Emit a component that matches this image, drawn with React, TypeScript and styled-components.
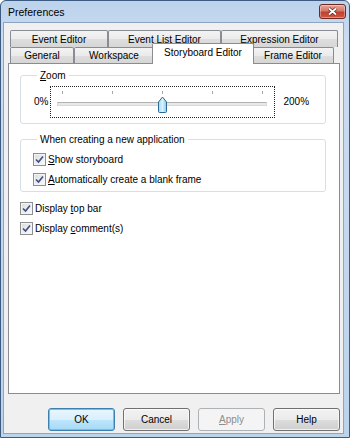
import React, { FC, ReactNode } from 'react';
import styled, { createGlobalStyle, css } from 'styled-components';

const GlobalStyle = createGlobalStyle`
  html,
  body {
    margin: 0;
    padding: 0;
    background: #fff;
  }

  body {
    font-family: 'Liberation Sans', Arial, sans-serif;
    font-size: 10px;
    color: #000;
  }
`;

const Window = styled.div`
  box-sizing: border-box;
  width: 350px;
  height: 438px;

  display: flex;
  flex-direction: column;

  padding: 0 5px 3px 2px;
  border: 1px solid #3d5a80;
  border-radius: 6px 6px 0 0;

  background: linear-gradient(#bcd3ec, #cadcf0 40px, #bcd3ec);
`;

const TitleBar = styled.div`
  height: 21px;

  display: flex;
  justify-content: space-between;
  align-items: center;

  padding-left: 5px;

  font-size: 10.5px;
`;

const CloseButton = styled.div`
  box-sizing: border-box;
  width: 27px;
  height: 15px;
  margin-right: -2px;

  display: flex;
  justify-content: center;
  align-items: center;

  border: 1px solid #6e2a22;
  border-radius: 3px;

  background: linear-gradient(#e6a699, #d47a6a 45%, #c0412d 55%, #d2583f);
  box-shadow: inset 0 0 0 1px rgba(255, 255, 255, 0.35);
`;

const Client = styled.div`
  flex: 1;

  display: flex;
  flex-direction: column;

  padding: 7px 3px 2px 4px;
  border: 1px solid #8ba5c2;

  background-color: #f0f0f0;
`;

const TabRow = styled.div<{ $height: number }>`
  height: ${(p) => p.$height}px;

  display: flex;
  align-items: flex-end;

  padding: 0 2px;
`;

const Tab = styled.div<{ $width: number; $selected?: boolean }>`
  box-sizing: border-box;
  width: ${(p) => p.$width}px;
  height: 100%;

  display: flex;
  justify-content: center;
  align-items: center;

  border: 1px solid #898c95;
  border-bottom: none;
  border-radius: 2px 2px 0 0;

  background: linear-gradient(#f3f3f3, #ebebeb 50%, #dedede 51%, #d6d6d6);

  ${(p) =>
    p.$selected &&
    css`
      position: relative;
      z-index: 2;

      height: 21px;
      margin: 0 -2px -1px;
      padding-bottom: 3px;

      background: #fff;
    `}
`;

const Panel = styled.div`
  flex: 1;

  display: flex;
  flex-direction: column;
  gap: 10px;

  padding: 6px 13px 0 11px;
  border: 1px solid #898c95;

  background-color: #fff;
`;

const Group = styled.fieldset<{ $inset?: number }>`
  min-inline-size: 0;
  margin: 0;
  padding: 0 0 5px ${(p) => p.$inset ?? 12}px;
  border: 1px solid #d5dfe5;
  border-radius: 3px;
`;

const Legend = styled.legend<{ $shift?: number }>`
  margin-left: ${(p) => 4 - (p.$shift ?? 0)}px;
  padding: 0 3px;

  line-height: 11px;
`;

const SliderLine = styled.div`
  display: flex;
  align-items: center;

  margin-top: 5px;
`;

const SliderLabel = styled.span<{ $before?: number; $after?: number }>`
  margin: 0 ${(p) => p.$after ?? 0}px 2px ${(p) => p.$before ?? 0}px;
`;

const SliderFocus = styled.div`
  position: relative;
  box-sizing: border-box;
  width: 225px;
  height: 32px;

  padding: 4px 0 0 11px;
  border: 1px dotted #222;
`;

const Ticks = styled.div`
  width: 201px;

  display: flex;
  justify-content: space-between;
`;

const Tick = styled.span`
  width: 1px;
  height: 3px;

  background-color: #a7a7a7;
`;

const Track = styled.div`
  box-sizing: border-box;
  width: 210px;
  height: 4px;
  margin: 8px 0 0 -5px;

  border: 1px solid #d9d9d9;
  border-top-color: #b3b3b3;

  background-color: #e8e8e8;
`;

const Thumb = styled.svg`
  position: absolute;
  left: 106px;
  top: 9px;
`;

const CheckList = styled.div<{ $indent?: number }>`
  display: flex;
  flex-direction: column;
  gap: 7px;

  padding-top: ${(p) => p.$indent ?? 0}px;
`;

const CheckRow = styled.label`
  height: 13px;

  display: flex;
  align-items: center;
  gap: 2px;
`;

const CheckBox = styled.span`
  box-sizing: border-box;
  width: 13px;
  height: 13px;

  display: flex;
  justify-content: center;
  align-items: center;

  border: 1px solid #8e8f8f;

  background: linear-gradient(135deg, #dcdcdc, #fbfbfb);
  box-shadow: inset 0 0 0 1px #f4f4f4;
`;

const ButtonBar = styled.div`
  display: flex;
  justify-content: flex-end;
  gap: 8px;

  margin-top: 14px;
`;

const Button = styled.div<{ $variant?: 'default' | 'disabled' }>`
  box-sizing: border-box;
  width: 67px;
  height: 23px;

  display: flex;
  justify-content: center;
  align-items: center;

  border: 1px solid #707070;
  border-radius: 3px;

  background: linear-gradient(#f2f2f2, #ebebeb 50%, #dddddd 51%, #cfcfcf);
  box-shadow: inset 0 0 0 1px rgba(255, 255, 255, 0.7);

  ${(p) =>
    p.$variant === 'default' &&
    css`
      border-color: #3c7fb1;
      background: linear-gradient(#eaf6fd, #d9f0fc 50%, #bee6fd 51%, #a7d9f5);
      box-shadow: inset 0 0 0 1px #48d3fb;
    `}

  ${(p) =>
    p.$variant === 'disabled' &&
    css`
      border-color: #adb2b5;
      background: #f4f4f4;
      box-shadow: none;
      color: #8d8d8d;
    `}
`;

const Check: FC<{ children: ReactNode }> = ({ children }) => (
  <CheckRow>
    <CheckBox>
      <svg width="9" height="9" viewBox="0 0 9 9">
        <path d="M1 4.5 L3.5 7 L8 1.5" fill="none" stroke="#3b4f8a" strokeWidth="1.6" />
      </svg>
    </CheckBox>
    <span>{children}</span>
  </CheckRow>
);

const backTabs = [
  { label: 'Event Editor', width: 98 },
  { label: 'Event List Editor', width: 113 },
  { label: 'Expression Editor', width: 117 },
];

const frontTabs = [
  { label: 'General', width: 64 },
  { label: 'Workspace', width: 80 },
  { label: 'Storyboard Editor', width: 102, selected: true },
  { label: 'Frame Editor', width: 82 },
];

const App: FC = () => {
  return (
    <>
      <GlobalStyle />
      <Window>
        <TitleBar>
          <span>Preferences</span>
          <CloseButton>
            <svg width="11" height="9" viewBox="0 0 11 9">
              <path d="M2 1.5 L9 7.5 M9 1.5 L2 7.5" stroke="#5a241c" strokeWidth="3.2" />
              <path d="M2 1.5 L9 7.5 M9 1.5 L2 7.5" stroke="#fff" strokeWidth="1.8" />
            </svg>
          </CloseButton>
        </TitleBar>

        <Client>
          <TabRow $height={17}>
            {backTabs.map((t) => (
              <Tab key={t.label} $width={t.width}>
                {t.label}
              </Tab>
            ))}
          </TabRow>
          <TabRow $height={16}>
            {frontTabs.map((t) => (
              <Tab key={t.label} $width={t.width} $selected={t.selected}>
                {t.label}
              </Tab>
            ))}
          </TabRow>

          <Panel>
            <Group $inset={13}>
              <Legend $shift={1}>
                <u>Z</u>oom
              </Legend>
              <SliderLine>
                <SliderLabel $after={2}>0%</SliderLabel>
                <SliderFocus>
                  <Ticks>
                    {[0, 1, 2, 3, 4].map((i) => (
                      <Tick key={i} />
                    ))}
                  </Ticks>
                  <Track />
                  <Thumb width="11" height="18" viewBox="0 0 11 18">
                    <defs>
                      <linearGradient id="thumbFill" x1="0" y1="0" x2="1" y2="0">
                        <stop offset="0" stopColor="#9fd8f5" />
                        <stop offset="0.5" stopColor="#d8f1fc" />
                        <stop offset="1" stopColor="#8ccbeb" />
                      </linearGradient>
                    </defs>
                    <path
                      d="M1.5 6 L5.5 1 L9.5 6 V15.5 Q9.5 16.5 8.5 16.5 H2.5 Q1.5 16.5 1.5 15.5 Z"
                      fill="url(#thumbFill)"
                      stroke="#2c6a96"
                    />
                  </Thumb>
                </SliderFocus>
                <SliderLabel $before={8}>200%</SliderLabel>
              </SliderLine>
            </Group>

            <Group>
              <Legend>When creating a new application</Legend>
              <CheckList $indent={8}>
                <Check>
                  <u>S</u>how storyboard
                </Check>
                <Check>
                  <u>A</u>utomatically create a blank frame
                </Check>
              </CheckList>
            </Group>

            <CheckList>
              <Check>
                Display <u>t</u>op bar
              </Check>
              <Check>
                Display <u>c</u>omment(s)
              </Check>
            </CheckList>
          </Panel>

          <ButtonBar>
            <Button $variant="default">OK</Button>
            <Button>Cancel</Button>
            <Button $variant="disabled">
              <span>
                <u>A</u>pply
              </span>
            </Button>
            <Button>Help</Button>
          </ButtonBar>
        </Client>
      </Window>
    </>
  );
};

export default App;
